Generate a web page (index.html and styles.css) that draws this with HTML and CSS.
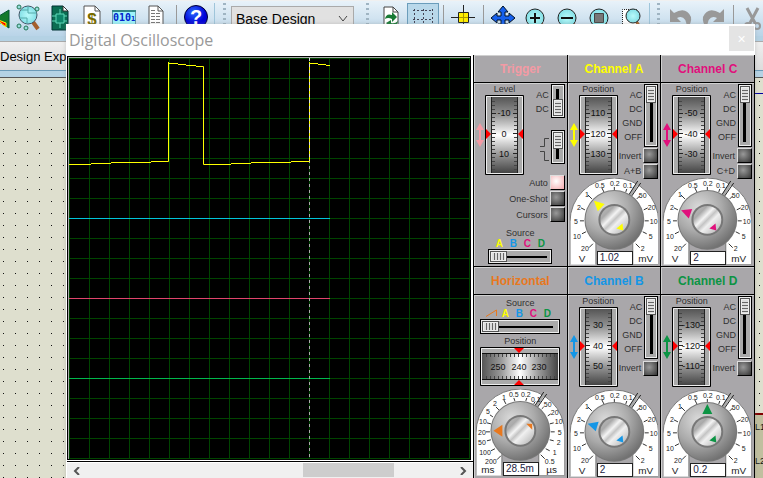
FILE: index.html
```html
<!DOCTYPE html>
<html lang="en">
<head>
<meta charset="utf-8">
<title>Digital Oscilloscope</title>
<link rel="stylesheet" href="styles.css">
</head>
<body>
<svg class="defs" aria-hidden="true">
  <defs>
    <linearGradient id="wheelV" x2="0" y2="1"><stop offset="0" stop-color="#555"/><stop offset=".25" stop-color="#999"/><stop offset=".5" stop-color="#fff"/><stop offset=".75" stop-color="#999"/><stop offset="1" stop-color="#444"/></linearGradient>
    <linearGradient id="wheelH"><stop offset="0" stop-color="#555"/><stop offset=".25" stop-color="#999"/><stop offset=".5" stop-color="#fff"/><stop offset=".75" stop-color="#999"/><stop offset="1" stop-color="#444"/></linearGradient>
    <radialGradient id="knobOuter" cx=".35" cy=".3" r=".8"><stop offset="0" stop-color="#dcdcdc"/><stop offset=".5" stop-color="#aaa"/><stop offset="1" stop-color="#666"/></radialGradient>
    <linearGradient id="knobInner" x2="1" y2="1"><stop offset="0" stop-color="#bbb"/><stop offset=".25" stop-color="#aaa"/><stop offset=".4" stop-color="#f4f4f4"/><stop offset=".5" stop-color="#c4c4c4"/><stop offset=".6" stop-color="#f0f0f0"/><stop offset="1" stop-color="#aaa"/></linearGradient>
    <radialGradient id="lens"><stop offset="0" stop-color="#b8fafa"/><stop offset="1" stop-color="#83dfe6"/></radialGradient>
    <radialGradient id="help" cx=".4" cy=".3"><stop offset="0" stop-color="#2a6cff"/><stop offset="1" stop-color="#0000d8"/></radialGradient>
    <pattern id="grid" width="20" height="20" patternUnits="userSpaceOnUse"><path d="M.5 0V20M0 .5H20" stroke="#004400"/></pattern>
  </defs>
</svg>
<svg class="symbols" aria-hidden="true">
  <symbol id="dial" viewBox="0 0 39 80">
    <path d="M.5 79.5V.5H38.5V79.5Z" fill="#aaa" stroke="#000"/><path d="M1.5 78.5V1.5H37.5V78.5Z" fill="none" stroke="#eee"/>
    <path d="M6.500 2V78M32.500 2V78" stroke="#222"/>
    <rect x="7" y="2" width="25" height="76" fill="url(#wheelV)"/>
    <path d="M8.500 6V76M30.500 6V76" stroke="#444" stroke-width="3" stroke-dasharray="1 3"/>
    <path d="M7 18.500h4M7 38.500h4M7 58.500h4M28 18.500h4M28 38.500h4M28 58.500h4" stroke="#222"/>
    <path d="M1 34v10l5-5zM38 34v10l-5-5z" fill="#f00"/>
  </symbol>
  <symbol id="arrows" viewBox="0 0 8 24"><path d="M4 0l4 7H5v10h3l-4 7-4-7h3V7H0z" fill="currentColor"/></symbol>
  <symbol id="arch" viewBox="0 0 89 87">
    <path d="M0 87V44A44.500 44 0 0 1 89 44V87H63V60H26V87Z" fill="#fff"/>
    <path d="M0 87V44A44.500 44 0 0 1 89 44V87H63V60M26 60V87" fill="none" stroke="#777"/>
    <path d="M60.500 17L70 2" stroke="#aaa" stroke-width="3"/><path d="M59 17L68 3M62 18L71 5" stroke="#222"/>
  </symbol>
  <symbol id="knob" viewBox="0 0 89 87">
    <circle cx="44.500" cy="42" r="30" fill="#777"/><circle cx="44.500" cy="42" r="29" fill="url(#knobOuter)"/>
    <circle cx="44.500" cy="42" r="16" fill="#777"/><circle cx="44.500" cy="42" r="14" fill="url(#knobInner)"/>
  </symbol>
  <symbol id="voltScale" viewBox="0 0 89 87">
    <use href="#arch"/>
    <path d="M44.500 12V9M34 14l-2-4M22 21l-4-4M15 32l-4-2M14 43h-4M16 54l-4 2M23 66l-4 4M56 14l1-3M67 21l3-3M74 32l4-2M75 43h4M73 54l4 2M66 66l4 4" stroke="#333" fill="none"/>
    <g class="scale"><text x="45" y="8">0.2</text><text x="30" y="10">0.5</text><text x="17" y="19">1</text><text x="9" y="32">2</text><text x="6" y="46">5</text><text x="7" y="61">10</text><text x="15" y="73">20</text><text x="58" y="10">0.1</text><text x="73" y="20">50</text><text x="82" y="32">20</text><text x="84" y="46">10</text><text x="81" y="61">5</text><text x="73" y="73">2</text></g>
    <g class="unit"><text x="12" y="84">V</text><text x="76" y="84">mV</text></g>
    <use href="#knob"/>
  </symbol>
</svg>

<div class="app">
  <header class="toolbar">
    <div class="group">
      <button class="tool edge" aria-label="Probe"><svg width="12" height="24"><path d="M-6 14L9 5v18z" fill="#137a2c" stroke="#053"/><path d="M-4 14l10 4v4z" fill="#f00" stroke="#ff0"/></svg></button>
      <button class="tool" aria-label="Explore"><svg width="24" height="28" viewBox="0 0 24 28"><path d="M17 19l5 7" stroke="#a5602c" stroke-width="4"/><circle cx="12" cy="12" r="9" fill="url(#lens)" stroke="#456"/><path d="M3 15h8v6M12 3v7h9M5 7h7" stroke="#5aa" fill="none"/><g fill="#9dd" stroke="#275"><circle cx="3" cy="4" r="2"/><circle cx="3" cy="23" r="2"/><circle cx="21" cy="6" r="2"/><circle cx="10" cy="25" r="2"/></g></svg></button>
      <button class="tool" aria-label="Board"><svg width="20" height="28" viewBox="0 0 20 28"><path d="M2 3h11l5 5v19H2z" fill="#0b6d52" stroke="#033"/><path d="M13 3v5h5z" fill="#fff" stroke="#333"/><path d="M6 11h8v9H6zM2 13h4M2 18h4M14 13h3M14 18h3M10 6v5M10 20v5" fill="#0d8468" stroke="#5fd8b8"/></svg></button>
      <button class="tool" aria-label="Bill of materials"><svg width="20" height="28" viewBox="0 0 20 28"><path d="M2 3h11l5 5v19H2z" fill="#fff" stroke="#555"/><path d="M13 3v5h5" fill="none" stroke="#555"/><text x="10" y="22" class="dollar">$</text></svg></button>
      <button class="tool" aria-label="Memory"><svg width="26" height="28" viewBox="0 0 26 28"><path d="M1.500 7.500h23v19h-23z" fill="#9df3fa" stroke="#69a"/><path d="M1 8h24" stroke="#388" stroke-width="2"/><text x="2" y="18" class="bits">010<tspan class="tiny">1</tspan></text></svg></button>
      <button class="tool" aria-label="Report"><svg width="20" height="28" viewBox="0 0 20 28"><path d="M3 3h9l5 5v19H3z" fill="#fff" stroke="#555"/><path d="M12 3v5h5" fill="none" stroke="#555"/><path d="M5 7.500h5M5 10.500h10M5 13.500h10M5 16.500h10M5 19.500h10" stroke="#777" stroke-dasharray="4 1"/></svg></button>
      <span class="sep"></span>
      <button class="tool" aria-label="Help"><svg width="24" height="28" viewBox="0 0 24 28"><circle cx="12" cy="14" r="11.500" fill="url(#help)" stroke="#003"/><text x="12" y="21" class="query">?</text></svg></button>
    </div>
    <span class="grip"></span>
    <select class="variant" aria-label="Design variant"><option>Base Design</option></select>
    <span class="grip far"></span>
    <div class="group">
      <button class="tool" aria-label="Refresh"><svg width="20" height="28" viewBox="0 0 20 28"><path d="M3 4h9l5 5v17H3z" fill="#fff" stroke="#444"/><path d="M12 4v5h5" fill="none" stroke="#444"/><path d="M4 16q1-6 7-4V9l5 5-5 5v-3q-4-2-7 0z" fill="#197a35"/><path d="M17 18q-1 6-7 4v3l-5-5 5-3v3q4 1 7-2z" fill="#197a35"/></svg></button>
      <button class="tool active" aria-label="Grid"><svg width="24" height="28" viewBox="0 0 24 28"><path d="M2 6.500h20M2 15.500h20M2 24.500h20M3.500 5v22M12.500 5v22M21.500 5v22" stroke="#445" stroke-dasharray="2 2"/></svg></button>
      <span class="sep"></span>
      <button class="tool" aria-label="Origin"><svg width="24" height="28" viewBox="0 0 24 28"><path d="M0 14.500h24M12.500 2v24" stroke="#222"/><path d="M7.500 9.500h10v10h-10z" fill="#fe0" stroke="#222"/><path d="M12.500 10v9M8 14.500h9" stroke="#a90"/></svg></button>
      <span class="sep"></span>
      <button class="tool" aria-label="Pan"><svg width="24" height="28" viewBox="0 0 24 28"><path d="M12 3l5 6h-3v4h4v-3l6 5-6 5v-3h-4v4h3l-5 6-5-6h3v-4H6v3l-6-5 6-5v3h4V9H7z" fill="#1560ee" stroke="#012"/></svg></button>
      <button class="tool" aria-label="Zoom in"><svg width="24" height="28" viewBox="0 0 24 28"><path d="M18 21l4 6" stroke="#a5602c" stroke-width="4"/><circle cx="12" cy="15" r="9" fill="url(#lens)" stroke="#222"/><path d="M7 15h10M12 10v10" stroke="#111" stroke-width="2"/></svg></button>
      <button class="tool" aria-label="Zoom out"><svg width="24" height="28" viewBox="0 0 24 28"><path d="M18 21l4 6" stroke="#a5602c" stroke-width="4"/><circle cx="12" cy="15" r="9" fill="url(#lens)" stroke="#222"/><path d="M6 15h12" stroke="#111" stroke-width="2"/></svg></button>
      <button class="tool" aria-label="Zoom all"><svg width="24" height="28" viewBox="0 0 24 28"><path d="M18 21l4 6" stroke="#a5602c" stroke-width="4"/><circle cx="12" cy="15" r="9" fill="url(#lens)" stroke="#222"/><path d="M7.500 10.500h9v9h-9z" fill="#777" stroke="#444"/></svg></button>
      <button class="tool" aria-label="Zoom area"><svg width="24" height="28" viewBox="0 0 24 28"><path d="M3.500 27V6.500h14V27" fill="#fff" stroke="#222" stroke-dasharray="1 1"/><path d="M17 18l4 6" stroke="#a5602c" stroke-width="3"/><circle cx="14" cy="13" r="7" fill="url(#lens)" stroke="#222"/></svg></button>
    </div>
    <span class="grip wide"></span>
    <div class="group">
      <button class="tool" aria-label="Undo"><svg width="24" height="28" viewBox="0 0 24 28"><path d="M1 6l4 4q12-7 17 4 1 6-4 11-1-14-10-10l4 4H1z" fill="#999"/></svg></button>
      <button class="tool" aria-label="Redo"><svg width="24" height="28" viewBox="0 0 24 28"><path d="M23 6l-4 4Q7 3 2 14q-1 6 4 11 1-14 10-10l-4 4h11z" fill="#999"/></svg></button>
      <span class="sep"></span>
      <button class="tool" aria-label="Cut"><svg width="24" height="28" viewBox="0 0 24 28"><path d="M6 5l8 15M17 5l-8 15" stroke="#999" stroke-width="3"/><g fill="none" stroke="#999" stroke-width="2"><circle cx="7" cy="23" r="3"/><circle cx="16" cy="23" r="3"/></g></svg></button>
    </div>
  </header>
  <nav class="tabs"><a href="#">Design Exp</a></nav>
  <main class="canvas"><div class="wire"></div><div class="sheet"><span>L1</span><span>L2</span></div></main>
</div>

<section class="window">
  <div class="titlebar"><h1>Digital Oscilloscope</h1><button class="close" aria-label="Close">×</button></div>
  <div class="scope">
    <div class="screen">
      <svg viewBox="0 0 401 401" role="img" aria-label="Traces">
        <rect width="401" height="401" fill="url(#grid)"/>
        <g fill="none">
          <path d="M0 160.500H261" stroke="#00c4d8"/><path d="M0 240.500H261" stroke="#e0446c"/><path d="M0 320.500H261" stroke="#00b84c"/>
          <path d="M240.500 0V401" stroke="#aaa" stroke-dasharray="3 3"/>
          <path d="M0 106.500H22M22 105.500H42M42 104.500H82M82 103.500H99.500V4M99 5.500H109M109 6.500H117M117 7.500H127M127 8.500H134.500V106.500H162M162 105.500H182M182 104.500H222M222 103.500H240.500V4M240 5.500H249M249 6.500H257M257 7.500H261" stroke="#ff0"/>
          <path d="M240.500 0V103" stroke="#ddd" stroke-dasharray="3 3"/>
        </g>
      </svg>
    </div>
    <div class="scrollbar">
      <button aria-label="Scroll left"><svg width="8" height="8" viewBox="0 0 8 8"><path d="M6 0L2 4l4 4" fill="none" stroke="#555" stroke-width="2"/></svg></button>
      <div class="rail"><div class="handle"></div></div>
      <button aria-label="Scroll right"><svg width="8" height="8" viewBox="0 0 8 8"><path d="M2 0l4 4-4 4" fill="none" stroke="#555" stroke-width="2"/></svg></button>
    </div>
  </div>

  <div class="panels">
    <section class="module trigger">
      <h2>Trigger</h2>
      <div class="body">
        <div class="top">
          <div class="level"><span class="caption">Level</span><svg class="arrows"><use href="#arrows"/></svg>
            <svg class="dial" viewBox="0 0 39 80"><use href="#dial"/><g class="digits"><text x="19" y="21">-10</text><text x="19" y="42">0</text><text x="19" y="62">10</text></g></svg></div>
          <div class="controls">
            <div class="switch"><div class="names"><span>AC</span><span>DC</span></div><input class="slide short" type="range" min="0" max="1" value="1" aria-label="Coupling"></div>
            <div class="switch second"><div class="names"><svg width="9" height="30" viewBox="0 0 9 30"><path d="M0 12.500H4.500V4.500H9M0 17.500H4.500V26.500H9" fill="none" stroke="#444"/></svg></div><input class="slide short" type="range" min="0" max="1" value="0" aria-label="Edge"></div>
          </div>
        </div>
        <div class="presses"><label for="auto">Auto</label><button id="auto" class="press lit"></button><label for="shot">One-Shot</label><button id="shot" class="press"></button><label for="cursors">Cursors</label><button id="cursors" class="press"></button></div>
        <div class="source"><label for="tsrc">Source</label><div class="letters"><b class="a">A</b><b class="b">B</b><b class="c">C</b><b class="d">D</b></div><input id="tsrc" class="slide flat" type="range" min="0" max="3" value="0"></div>
      </div>
    </section>

    <section class="module a">
      <h2>Channel A</h2>
      <div class="body">
        <div class="top">
          <div class="level"><span class="caption">Position</span><svg class="arrows"><use href="#arrows"/></svg>
            <svg class="dial" viewBox="0 0 39 80"><use href="#dial"/><g class="digits"><text x="19" y="21">110</text><text x="19" y="42">120</text><text x="19" y="62">130</text></g></svg></div>
          <div class="controls">
            <div class="switch"><div class="names"><span>AC</span><span>DC</span><span>GND</span><span>OFF</span></div><input class="slide" type="range" min="0" max="3" value="0" aria-label="Channel A coupling"></div>
            <div class="option"><label for="ia">Invert</label><button id="ia" class="press"></button></div>
            <div class="option"><label for="ab">A+B</label><button id="ab" class="press"></button></div>
          </div>
        </div>
        <div class="gain"><svg viewBox="0 0 89 87"><use href="#voltScale"/><g transform="translate(44.5 42)" fill="currentColor"><path d="M0-28l5 10H-5z" transform="rotate(-47)"/><path d="M0-14l4 6h-8z" transform="rotate(140)"/></g></svg><input type="text" value="1.02" aria-label="Channel A scale"></div>
      </div>
    </section>

    <section class="module c">
      <h2>Channel C</h2>
      <div class="body">
        <div class="top">
          <div class="level"><span class="caption">Position</span><svg class="arrows"><use href="#arrows"/></svg>
            <svg class="dial" viewBox="0 0 39 80"><use href="#dial"/><g class="digits"><text x="19" y="21">-50</text><text x="19" y="42">-40</text><text x="19" y="62">-30</text></g></svg></div>
          <div class="controls">
            <div class="switch"><div class="names"><span>AC</span><span>DC</span><span>GND</span><span>OFF</span></div><input class="slide" type="range" min="0" max="3" value="0" aria-label="Channel C coupling"></div>
            <div class="option"><label for="ic">Invert</label><button id="ic" class="press"></button></div>
            <div class="option"><label for="cd">C+D</label><button id="cd" class="press"></button></div>
          </div>
        </div>
        <div class="gain"><svg viewBox="0 0 89 87"><use href="#voltScale"/><g transform="translate(44.5 42)" fill="currentColor"><path d="M0-28l5 10H-5z" transform="rotate(-70)"/><path d="M0-14l4 6h-8z" transform="rotate(140)"/></g></svg><input type="text" value="2" aria-label="Channel C scale"></div>
      </div>
    </section>

    <section class="module horizontal">
      <h2>Horizontal</h2>
      <div class="body">
        <div class="source wide"><label for="hsrc">Source</label><div class="letters"><svg width="12" height="8" viewBox="0 0 12 8"><path d="M0 7.500L10.500 1V7" fill="none" stroke="#e8781e"/></svg><b class="a">A</b><b class="b">B</b><b class="c">C</b><b class="d">D</b></div><input id="hsrc" class="slide flat" type="range" min="0" max="4" value="0"></div>
        <span class="caption">Position</span>
        <svg class="drum" viewBox="0 0 80 39">
          <path d="M.5.5H79.500V38.500H.5Z" fill="#aaa" stroke="#000"/><path d="M1.500 1.500H78.500V37.500H1.500Z" fill="none" stroke="#eee"/>
          <rect x="2" y="7" width="76" height="25" fill="url(#wheelH)"/><path d="M2 6.500H78M2 32.500H78" stroke="#111"/>
          <path d="M6 8.500H76M6 30.500H76" stroke="#444" stroke-width="3" stroke-dasharray="1 3"/><path d="M34 1h10l-5 5zM34 38h10l-5-5z" fill="#f00"/>
          <g class="digits"><text x="18" y="23">250</text><text x="39" y="23">240</text><text x="59" y="23">230</text></g>
        </svg>
        <div class="gain"><svg viewBox="0 0 89 87"><use href="#arch"/>
          <path d="M39 12l-1-3M30 15l-2-4M23 21l-3-3M17 28l-3-2M15 35l-4-1M14 43h-4M15 51l-4 1M19 60l-4 2M25 67l-4 4M50 12l1-3M58 15l1-2M66 20l2-2M72 27l3-2M74 35l4-1M75 43h4M74 51l4 1M70 60l4 2M65 66l4 4" stroke="#333"/>
          <g class="scale"><text x="28" y="11">1</text><text x="38" y="8">0.5</text><text x="50" y="8">0.2</text><text x="60" y="13">0.1</text><text x="19" y="17">2</text><text x="12" y="25">5</text><text x="7" y="35">10</text><text x="6" y="46">20</text><text x="6" y="56">50</text><text x="9" y="66">100</text><text x="15" y="75">200</text><text x="72" y="18">50</text><text x="79" y="26">20</text><text x="83" y="35">10</text><text x="84" y="46">5</text><text x="83" y="56">2</text><text x="79" y="66">1</text><text x="74" y="75">0.5</text></g>
          <g class="unit"><text x="12" y="84">ms</text><text x="76" y="84">µs</text></g><use href="#knob"/>
          <g transform="translate(44.5 42)" fill="currentColor"><path d="M0-27l6 9H-6z" transform="rotate(-90)"/><path d="M6-7h6v6z"/></g></svg><input type="text" value="28.5m" aria-label="Time base"></div>
      </div>
    </section>

    <section class="module b">
      <h2>Channel B</h2>
      <div class="body">
        <div class="top">
          <div class="level"><span class="caption">Position</span><svg class="arrows"><use href="#arrows"/></svg>
            <svg class="dial" viewBox="0 0 39 80"><use href="#dial"/><g class="digits"><text x="19" y="21">30</text><text x="19" y="42">40</text><text x="19" y="62">50</text></g></svg></div>
          <div class="controls">
            <div class="switch"><div class="names"><span>AC</span><span>DC</span><span>GND</span><span>OFF</span></div><input class="slide" type="range" min="0" max="3" value="0" aria-label="Channel B coupling"></div>
            <div class="option"><label for="ib">Invert</label><button id="ib" class="press"></button></div>
          </div>
        </div>
        <div class="gain"><svg viewBox="0 0 89 87"><use href="#voltScale"/><g transform="translate(44.5 42)" fill="currentColor"><path d="M0-28l5 10H-5z" transform="rotate(-73)"/><path d="M0-14l4 6h-8z" transform="rotate(140)"/></g></svg><input type="text" value="2" aria-label="Channel B scale"></div>
      </div>
    </section>

    <section class="module d">
      <h2>Channel D</h2>
      <div class="body">
        <div class="top">
          <div class="level"><span class="caption">Position</span><svg class="arrows"><use href="#arrows"/></svg>
            <svg class="dial" viewBox="0 0 39 80"><use href="#dial"/><g class="digits"><text x="19" y="21">-130</text><text x="19" y="42">-120</text><text x="19" y="62">-110</text></g></svg></div>
          <div class="controls">
            <div class="switch"><div class="names"><span>AC</span><span>DC</span><span>GND</span><span>OFF</span></div><input class="slide" type="range" min="0" max="3" value="0" aria-label="Channel D coupling"></div>
            <div class="option"><label for="id">Invert</label><button id="id" class="press"></button></div>
          </div>
        </div>
        <div class="gain"><svg viewBox="0 0 89 87"><use href="#voltScale"/><g transform="translate(44.5 42)" fill="currentColor"><path d="M0-28l5 10H-5z"/><path d="M0-14l4 6h-8z" transform="rotate(140)"/></g></svg><input type="text" value="0.2" aria-label="Channel D scale"></div>
      </div>
    </section>
  </div>
</section>
</body>
</html>
```
FILE: styles.css
```css
* { box-sizing: border-box; }
html, body { height: 100%; }
body { margin: 0; overflow: hidden; font-family: "Liberation Sans", Arial, sans-serif; font-size: 9px; color: #303030; }
button, input, select { font: inherit; color: inherit; margin: 0; padding: 0; border: 0; border-radius: 0; }
svg { display: block; flex: none; }
.defs { position: absolute; width: 0; height: 0; }
.symbols { display: none; }

.app { display: flex; flex-direction: column; min-height: 100%; background: #e4e6ea; }
.toolbar { display: flex; height: 36px; padding-top: 2px; background: linear-gradient(#e8f2f9, #b9d4e8); border-top: 1px solid #f0f0f0; overflow: hidden; }
.group { display: flex; flex: none; padding-right: 2px; border-right: 1px solid #9fc5da; }
.tool { display: grid; place-items: center; width: 32px; height: 28px; background: none; flex: none; }
.tool.edge { width: 12px; justify-items: start; }
.tool.active { background: #b9d8ea; border: 1px solid #6b9dbb; }
.sep { width: 8px; flex: none; background: linear-gradient(#999, #999) 4px 2px / 1px 100% no-repeat; }
.grip { width: 3px; flex: none; margin: 0 5px 0 8px; background: repeating-linear-gradient(#9fb4c2 0 2px, transparent 2px 5px); }
.grip.wide { margin-left: 7px; }
.grip.far { margin-left: 12px; margin-right: 6px; }
.variant { appearance: none; width: 123px; height: 26px; margin-top: 3px; padding: 0 4px; flex: none; border: 1px solid #aaa; color: #000; font-size: 14px;
  background: url("data:image/svg+xml,%3Csvg xmlns='http://www.w3.org/2000/svg' width='10' height='6'%3E%3Cpath d='M1 0l4 5 4-5' fill='none' stroke='%23444'/%3E%3C/svg%3E") no-repeat right 5px center, #e1e1e1; }
.dollar { font-size: 17px; font-weight: bold; text-anchor: middle; fill: #776b00; }
.bits { font: bold 10px "DejaVu Sans Mono", monospace; fill: #0022cc; }
.tiny { font-size: 7px; }
.query { font-size: 20px; font-weight: bold; text-anchor: middle; fill: #fff; }
.tabs { height: 42px; padding-top: 5px; border-bottom: 1px solid #555; background: #b4d2e4; }
.tabs a { display: flex; align-items: center; height: 30px; border-bottom: 1px solid #6a9ab8; border-top: 1px solid #aaa; background: linear-gradient(#efefef, #dcdcdc); color: #000; font-size: 13px; text-decoration: none; white-space: nowrap; }
.canvas { flex: 1; display: flex; flex-direction: column; align-items: flex-end; justify-content: space-between; padding-top: 15px;
  background: linear-gradient(90deg, #dedfce 11px, transparent 11px) 4px 4px / 12px 12px, linear-gradient(#dedfce 11px, #111 11px) 4px 4px / 12px 12px; }
.wire { width: 8px; height: 1px; background: #0000a0; }
.sheet { display: flex; flex-direction: column; gap: 24px; width: 8px; height: 65px; padding-top: 7px; border-top: 2px solid #800000; background: #c0bf9f; color: #111; }

.window { position: absolute; left: 66px; right: 8px; top: 24px; display: grid; grid-template-columns: 1fr 282px; background: #fff; box-shadow: 0 0 4px #8886; }
.titlebar { grid-column: 1 / -1; display: flex; justify-content: space-between; height: 31px; padding: 2px 1px 0 3px; }
h1 { margin: 0; font: 16px/28px "Open Sans", "Noto Sans", sans-serif; color: #999; }
.close { width: 25px; height: 25px; background: #e4e4e4; color: #fff; font-size: 14px; }
.scope { display: flex; flex-direction: column; padding: 1px 0 0 1px; min-width: 0; }
.screen { margin-right: 2px; border: 1px solid #aaa; background: #000; outline: 1px solid #000; outline-offset: -1px; border-left: 2px solid #aaa; border-top: 2px solid #aaa; }
.screen svg { width: 100%; height: auto; }
.scrollbar { display: flex; height: 18px; margin-top: 1px; border-top: 1px solid #000; box-shadow: inset 0 1px #fff; background: #f0f0f0; }
.scrollbar button { display: grid; place-items: center; width: 20px; background: none; }
.rail { flex: 1; padding: 1px 0; }
.handle { width: 25%; height: 14px; margin-left: 59%; background: #cdcdcd; }

.panels { display: grid; grid-template-columns: repeat(3, 1fr); border-right: 1px solid #000; background: #a9a7aa; }
.module { height: 212px; border-left: 1px solid #000; border-bottom: 1px solid #000; box-shadow: inset 1px 1px #d0d0d0; }
.a { color: #ff0; } .b { color: #1496e6; } .c { color: #e0107c; } .d { color: #0c9444; } .trigger { color: #f49aa4; } .horizontal { color: #e8781e; }
h2 { margin: 0; height: 28px; border-bottom: 1px solid #000; font-size: 12px; line-height: 29px; text-align: center; }
.body { display: flex; flex-direction: column; padding: 1px 2px 0; box-shadow: inset 0 1px #d0d0d0; }
.top { display: flex; height: 95px; }
.level { display: grid; grid-template: 11px 80px / 8px 39px; column-gap: 1px; align-items: center; }
.caption { grid-column: 2; justify-self: center; color: #303030; line-height: 11px; text-align: center; }
.arrows { width: 8px; height: 24px; }
.dial { width: 39px; height: 80px; }
.digits { font-size: 9px; text-anchor: middle; fill: #111; }
.controls { flex: 1; display: flex; flex-direction: column; color: #303030; }
.switch { display: flex; justify-content: flex-end; gap: 2px; margin-bottom: 1px; }
.switch.second { margin-top: 11px; }
.switch .names { display: flex; flex-direction: column; align-items: flex-end; padding-top: 4px; line-height: 14px; }
.slide { appearance: none; writing-mode: vertical-lr; flex: none; width: 14px; height: 63px; border: 1px solid #000; box-shadow: inset 0 0 0 1px #eee; background: linear-gradient(#000, #000) center / 3px 52px no-repeat #aaa; padding: 2px; }
.slide.short { height: 34px; background-size: 3px 24px; }
.slide::-webkit-slider-thumb { appearance: none; width: 8px; height: 15px; border: 1px solid #eee; background: repeating-linear-gradient(#ddd 0 2px, #666 2px 3px); box-shadow: 0 0 0 1px #555; }
.slide.flat { writing-mode: horizontal-tb; height: 15px; width: 64px; background: linear-gradient(#000, #000) center / 54px 2px no-repeat #aaa; }
.slide.flat::-webkit-slider-thumb { width: 15px; height: 9px; background: repeating-linear-gradient(90deg, #ddd 0 2px, #666 2px 3px); }
.option { display: flex; justify-content: flex-end; align-items: center; gap: 2px; height: 16px; }
.press { width: 15px; height: 15px; border: 1px solid #000; border-top-color: #ddd; border-left-color: #ddd; background: radial-gradient(circle at 40% 40%, #999, #333); }
.press.lit { background: radial-gradient(circle at 40% 40%, #fff, #f4a8ac); }
.presses { display: grid; grid-template-columns: 1fr 15px; gap: 1px 2px; margin-top: -4px; align-items: center; justify-items: end; color: #303030; }
.source { display: flex; flex-direction: column; align-items: center; margin-top: 6px; line-height: 11px; }
.source label { color: #303030; }
.letters { display: flex; line-height: 9px; height: 10px; font-size: 10px; }
.letters b { width: 14px; text-align: center; }
.source.wide { margin-top: 2px; }
.source.wide .slide { width: 80px; background-size: 66px 2px; }
.horizontal .caption { margin-top: 2px; }
.drum { width: 80px; height: 39px; align-self: center; margin-bottom: 3px; }
.gain { position: relative; margin-top: -1px; }
.horizontal .gain { margin-top: 0; }
.gain svg { width: 100%; height: auto; }
.gain input { position: absolute; left: 27px; bottom: 0; width: 36px; height: 14px; padding: 0 2px; border: 1px solid #222; background: #fff; color: #224; font-size: 10px; }
.scale { font-size: 7px; text-anchor: middle; fill: #222; }
.unit { font-size: 10px; text-anchor: middle; fill: #222; }
```
